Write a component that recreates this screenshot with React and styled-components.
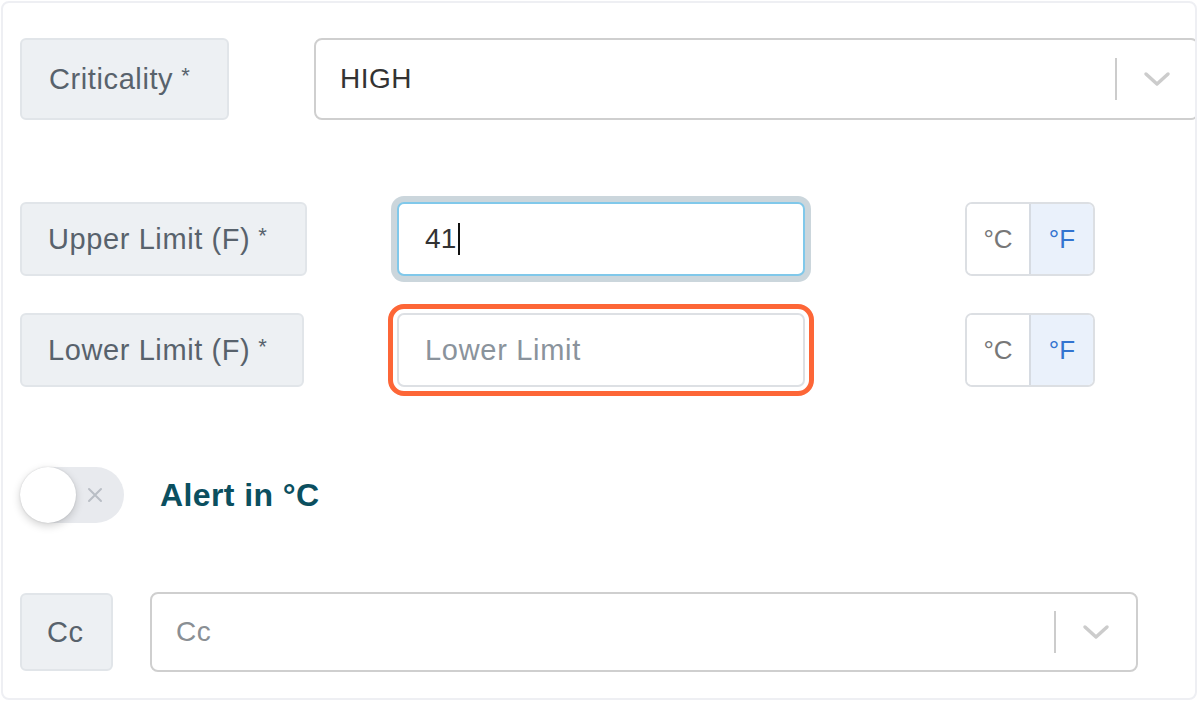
import React from "react";
import styled, { createGlobalStyle } from "styled-components";

const Global = createGlobalStyle`
  html, body { margin: 0; padding: 0; background: #ffffff; }
  body { font-family: "Liberation Sans", Arial, sans-serif; }
  * { box-sizing: border-box; }
`;

const Card = styled.div`
  margin: 1px 0 0 1px;
  width: 1196px;
  height: 699px;
  border: 2px solid #eeeff3;
  border-radius: 8px;
  padding: 35px 0 0 17px;
  display: flex;
  flex-direction: column;
  overflow: hidden;
`;

const Row = styled.div`
  display: flex;
  align-items: center;
  margin-top: ${(p) => p.$mt || 0}px;
  height: ${(p) => p.$h}px;
`;

const LimitGrid = styled.div`
  display: grid;
  grid-template-columns: 377px 408px 160px 130px;
  grid-auto-rows: 74px;
  row-gap: 37px;
  align-items: center;
  margin-top: 82px;
`;

const Label = styled.div`
  height: ${(p) => p.$h}px;
  width: ${(p) => p.$w}px;
  flex: none;
  background: #edf0f3;
  border: 2px solid #e1e5e9;
  border-radius: 6px;
  color: #58626c;
  font-size: 29px;
  letter-spacing: 0.6px;
  display: flex;
  align-items: center;
  padding-left: ${(p) => p.$pl || 26}px;
`;

const Star = styled.span`
  font-size: 22px;
  margin-left: 8px;
  position: relative;
  top: -3px;
`;

const Select = styled.div`
  height: ${(p) => p.$h}px;
  width: ${(p) => p.$w}px;
  margin-left: ${(p) => p.$ml}px;
  flex: none;
  border: 2px solid #cfcfcf;
  border-radius: 8px;
  background: #fff;
  display: flex;
  align-items: center;
  padding-left: 24px;
`;

const SelectValue = styled.div`
  flex: 1;
  font-size: 28px;
  color: ${(p) => (p.$placeholder ? "#8a8f94" : "#333")};
  letter-spacing: 0.5px;
`;

const Divider = styled.div`
  width: 2px;
  height: 42px;
  background: #cccccc;
`;

const Chevron = styled.div`
  width: 80px;
  display: flex;
  justify-content: center;
  align-items: center;
`;

const Input = styled.div`
  grid-column: 2;
  height: 74px;
  border: 2px solid ${(p) => (p.$focus ? "#80c8ea" : "#dde0e4")};
  background: #fff;
  border-radius: 7px;
  display: flex;
  align-items: center;
  padding-left: 26px;
  font-size: ${(p) => (p.$placeholder ? 29 : 28)}px;
  color: ${(p) => (p.$placeholder ? "#8a939c" : "#333")};
  letter-spacing: ${(p) => (p.$placeholder ? 0.7 : 0.3)}px;
  box-shadow: ${(p) => (p.$focus ? "0 0 0 6px #cbd6dc" : "none")};
  outline: ${(p) => (p.$error ? "5px solid #fd6637" : "none")};
  outline-offset: 4px;
`;

const Caret = styled.span`
  display: inline-block;
  width: 2px;
  height: 32px;
  background: #111;
  margin-left: 1px;
`;

const UnitGroup = styled.div`
  grid-column: 4;
  display: flex;
  height: 74px;
  border: 2px solid #dcdfe3;
  border-radius: 7px;
  overflow: hidden;
`;

const Unit = styled.div`
  flex: 1;
  display: flex;
  align-items: center;
  justify-content: center;
  font-size: 26px;
  background: ${(p) => (p.$active ? "#eaf1fb" : "#fff")};
  color: ${(p) => (p.$active ? "#3374d0" : "#777")};
  & + & {
    border-left: 2px solid #d6dbe2;
  }
`;

const Switch = styled.div`
  position: relative;
  width: 104px;
  height: 56px;
  border-radius: 28px;
  background: #e8eaee;
  flex: none;
`;

const Knob = styled.div`
  position: absolute;
  left: 0;
  top: 0;
  width: 56px;
  height: 56px;
  border-radius: 50%;
  background: #fff;
  box-shadow: 0 3px 8px rgba(0, 0, 0, 0.18), 0 0 2px rgba(0, 0, 0, 0.12);
`;

const SwitchX = styled.svg`
  position: absolute;
  left: 66px;
  top: 19px;
`;

const AlertText = styled.div`
  margin-left: 36px;
  font-size: 32px;
  font-weight: 700;
  color: #0b4f5f;
  letter-spacing: 0.4px;
`;

const ChevronIcon = () => (
  <svg width="28" height="16" viewBox="0 0 28 16">
    <path d="M3 3 L14 13 L25 3" fill="none" stroke="#cccccc" strokeWidth="3.5" strokeLinecap="round" strokeLinejoin="round" />
  </svg>
);

const Units = () => (
  <UnitGroup>
    <Unit>°C</Unit>
    <Unit $active>°F</Unit>
  </UnitGroup>
);

export default function App() {
  return (
    <>
      <Global />
      <Card>
        <Row $h={82}>
          <Label $h={82} $w={209} $pl={27}>Criticality<Star>*</Star></Label>
          <Select $h={82} $w={885} $ml={85}>
            <SelectValue>HIGH</SelectValue>
            <Divider />
            <Chevron><ChevronIcon /></Chevron>
          </Select>
        </Row>
        <LimitGrid>
          <Label $h={74} $w={287}>Upper Limit (F)<Star>*</Star></Label>
          <Input $focus>41<Caret /></Input>
          <Units />
          <Label $h={74} $w={284}>Lower Limit (F)<Star>*</Star></Label>
          <Input $placeholder $error>Lower Limit</Input>
          <Units />
        </LimitGrid>
        <Row $h={56} $mt={80}>
          <Switch>
            <Knob />
            <SwitchX width="18" height="18" viewBox="0 0 18 18">
              <path d="M3 3 L15 15 M15 3 L3 15" stroke="#b9bec5" strokeWidth="2" strokeLinecap="round" />
            </SwitchX>
          </Switch>
          <AlertText>Alert in °C</AlertText>
        </Row>
        <Row $h={80} $mt={69}>
          <Label $h={78} $w={93} $pl={25}>Cc</Label>
          <Select $h={80} $w={988} $ml={37}>
            <SelectValue $placeholder>Cc</SelectValue>
            <Divider />
            <Chevron><ChevronIcon /></Chevron>
          </Select>
        </Row>
      </Card>
    </>
  );
}
